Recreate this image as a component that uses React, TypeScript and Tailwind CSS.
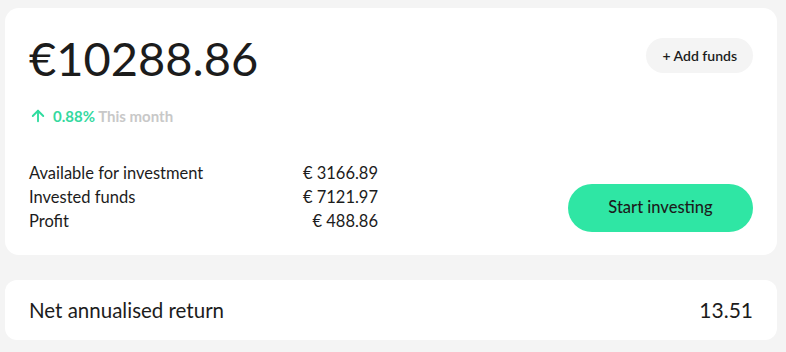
import { ArrowUp } from 'lucide-react'

const rows = [
  { label: 'Available for investment', value: '€ 3166.89' },
  { label: 'Invested funds', value: '€ 7121.97' },
  { label: 'Profit', value: '€ 488.86' },
]

export default function App() {
  return (
    <div
      className="min-h-[352px] w-[786px] bg-[#f4f4f4] pl-[5px] pr-[9px] pt-[8px] text-[#1c1c1c]"
      style={{ fontFamily: 'Lato, "Noto Sans", sans-serif' }}
    >
      {/* Balance card */}
      <div className="flex h-[247px] flex-col rounded-[14px] bg-white px-6 pt-[22px]">
        <div className="flex items-start justify-between">
          <h1 className="text-[47px] leading-[56px] font-normal">€10288.86</h1>
          <button className="mt-[8px] h-[35px] rounded-full bg-[#f4f4f4] px-[16px] text-[14px] font-semibold">
            + Add funds
          </button>
        </div>

        <div className="mt-[19px] flex items-center gap-[6px] text-[15px] font-bold">
          <ArrowUp className="h-[18px] w-[18px] text-[#2fdc9f]" strokeWidth={2.5} />
          <span>
            <span className="text-[#35d9a0]">0.88%</span>{' '}
            <span className="text-[#c8c8c8]">This month</span>
          </span>
        </div>

        <div className="mt-[33px] flex items-end justify-between">
          <div className="w-[349px] text-[16.5px] leading-[24px]">
            {rows.map((row) => (
              <div key={row.label} className="flex justify-between">
                <span>{row.label}</span>
                <span>{row.value}</span>
              </div>
            ))}
          </div>
          <button className="mb-[1px] h-[48px] w-[185px] rounded-full bg-[#2fe6a4] text-[16.5px] font-medium">
            Start investing
          </button>
        </div>
      </div>

      {/* Return card */}
      <div className="mt-[25px] flex h-[60px] items-center justify-between rounded-[12px] bg-white px-6">
        <span className="text-[20.5px]">Net annualised return</span>
        <span className="text-[21px]">13.51</span>
      </div>
    </div>
  )
}
